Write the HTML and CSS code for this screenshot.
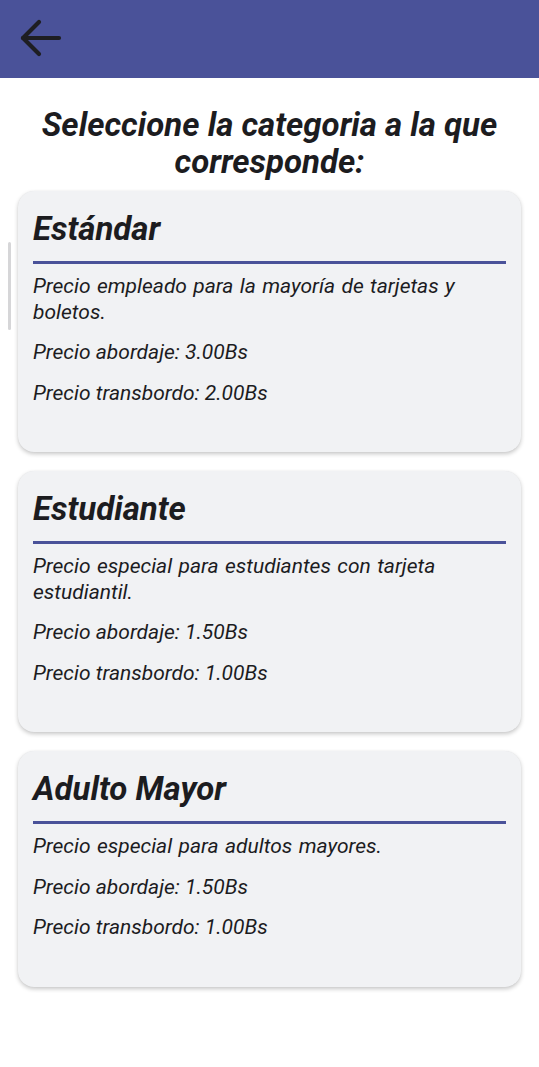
FILE: index.html
```html
<!DOCTYPE html>
<html lang="es">
<head>
<meta charset="utf-8">
<title>Categorías</title>
<link rel="stylesheet" href="styles.css">
</head>
<body>
<header class="appbar">
  <button class="back" aria-label="Volver">
    <svg width="44" height="44" viewBox="0 0 44 44" fill="none" stroke="#1e1e22" stroke-width="4.2" stroke-linecap="round" stroke-linejoin="round">
      <path d="M3 20 H39"/>
      <path d="M19 4 L3 20 L19 36"/>
    </svg>
  </button>
</header>
<main class="content">
  <div class="scrollhint"></div>
  <h1 class="title">Seleccione la categoria a la que corresponde:</h1>
  <section class="card">
    <h2 class="card-title">Estándar</h2>
    <hr class="divider">
    <p class="line desc">Precio empleado para la mayoría de tarjetas y boletos.</p>
    <p class="line">Precio abordaje: 3.00Bs</p>
    <p class="line">Precio transbordo: 2.00Bs</p>
  </section>
  <section class="card">
    <h2 class="card-title">Estudiante</h2>
    <hr class="divider">
    <p class="line desc">Precio especial para estudiantes con tarjeta estudiantil.</p>
    <p class="line">Precio abordaje: 1.50Bs</p>
    <p class="line">Precio transbordo: 1.00Bs</p>
  </section>
  <section class="card">
    <h2 class="card-title">Adulto Mayor</h2>
    <hr class="divider">
    <p class="line desc">Precio especial para adultos mayores.</p>
    <p class="line">Precio abordaje: 1.50Bs</p>
    <p class="line">Precio transbordo: 1.00Bs</p>
  </section>
</main>
</body>
</html>
```
FILE: styles.css
```css
* { box-sizing: border-box; }
html, body { margin: 0; padding: 0; background: #ffffff; }
body {
  font-family: Roboto, "Noto Sans", "Liberation Sans", sans-serif;
  color: #1c1c1f;
  width: 539px;
}
.appbar {
  height: 78px;
  background: #4a5299;
  display: flex;
  align-items: center;
  padding-left: 20px;
}
.back {
  background: none;
  border: 0;
  padding: 0;
  margin: 0;
  width: 44px;
  height: 44px;
  display: block;
  margin-top: 1px;
}
.back svg { display: block; }
.content {
  position: relative;
  padding: 28px 18px 40px;
  display: flex;
  flex-direction: column;
  gap: 19px;
}
.scrollhint {
  position: absolute;
  left: 8px;
  top: 164px;
  width: 3px;
  height: 88px;
  background: #d6d6d8;
  border-radius: 2px;
}
.title {
  margin: 0 0 -8px;
  text-align: center;
  font-size: 33px;
  line-height: 37px;
  font-weight: 700;
  font-style: italic;
  padding: 0 10px;
}
.card {
  background: #f1f2f4;
  border-radius: 16px;
  box-shadow: 0 2px 4px rgba(0,0,0,0.22), 0 0 1px rgba(0,0,0,0.08);
  padding: 21px 15px 32px;
}
.card-title {
  margin: 0 0 15px;
  font-size: 33px;
  line-height: 34px;
  font-weight: 700;
  font-style: italic;
}
.divider {
  border: 0;
  height: 3px;
  background: #4a5299;
  margin: 0 0 10px;
}
.line {
  margin: 0 0 15px;
  font-size: 21px;
  line-height: 25.5px;
  font-style: italic;
  font-weight: 400;
}
.desc { word-spacing: 1.2px; }
.line:last-child { margin-bottom: 14px; }
```
